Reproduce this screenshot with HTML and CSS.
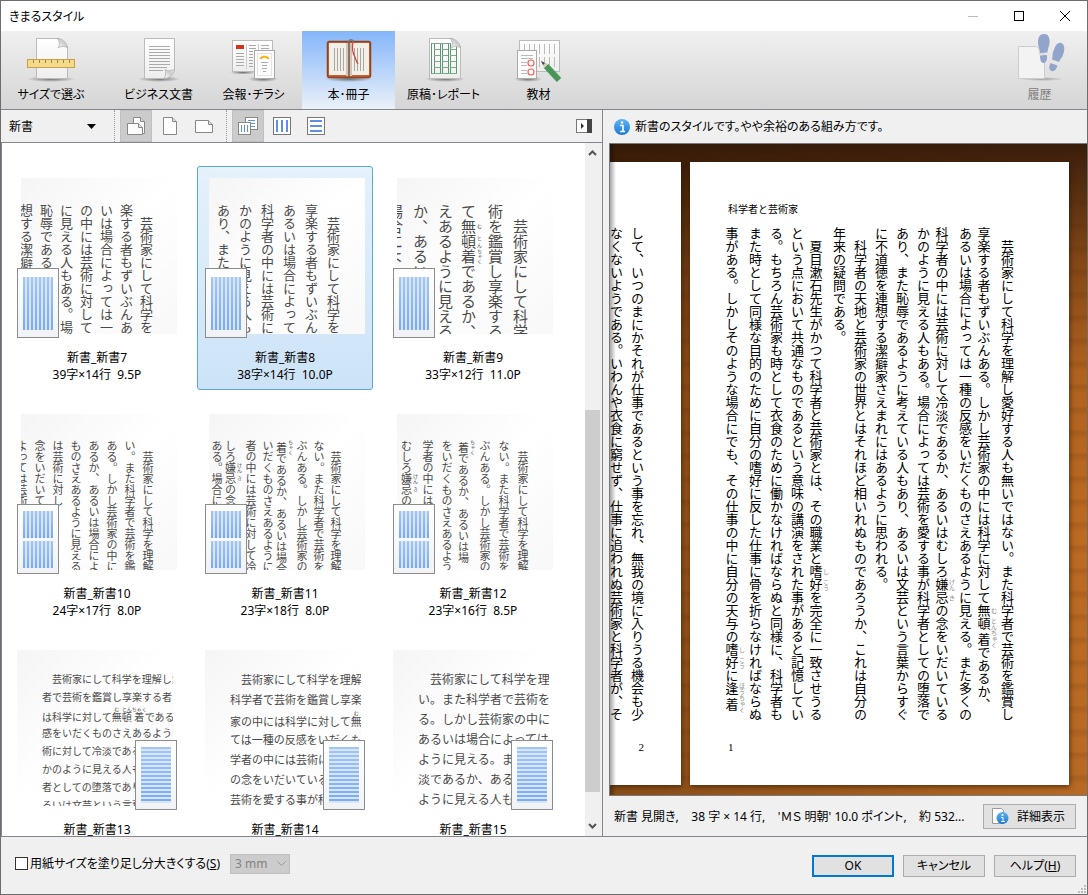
FILE: index.html
```html
<!DOCTYPE html>
<html lang="ja">
<head>
    <meta charset="UTF-8">
    <meta name="viewport" content="width=device-width, initial-scale=1.0">
    <title>きまるスタイル</title>
    <link rel="stylesheet" href="styles.css">
</head>
<body>
<div class="window">

    <!-- Title bar -->
    <header class="titlebar">
        <h1>きまるスタイル</h1>
        <div class="window-buttons">
            <button type="button" aria-label="最小化" disabled><svg width="12" height="12" viewBox="0 0 12 12"><path d="M1 6.5h10" stroke="#bbb" fill="none"/></svg></button>
            <button type="button" aria-label="最大化"><svg width="12" height="12" viewBox="0 0 12 12"><rect x="1.5" y="1.5" width="9" height="9" stroke="#000" fill="none"/></svg></button>
            <button type="button" aria-label="閉じる"><svg width="12" height="12" viewBox="0 0 12 12"><path d="M1 1l10 10M11 1L1 11" stroke="#000" fill="none"/></svg></button>
        </div>
    </header>

    <!-- Categories -->
    <nav class="categories">
        <button type="button" class="category category-first">
            <svg width="50" height="50" viewBox="0 0 50 50">
                <defs>
                    <linearGradient id="paper" x1="0" y1="0" x2="0" y2="1"><stop offset="0" stop-color="#fff"/><stop offset="1" stop-color="#eee"/></linearGradient>
                    <linearGradient id="curl" x1="0" y1="1" x2="1" y2="0"><stop offset="0" stop-color="#fff"/><stop offset="0.6" stop-color="#ccc"/><stop offset="1" stop-color="#f4f4f4"/></linearGradient>
                    <radialGradient id="shade"><stop offset="0" stop-color="#555" stop-opacity="0.8"/><stop offset="1" stop-color="#555" stop-opacity="0"/></radialGradient>
                </defs>
                <ellipse cx="25" cy="46" rx="24" ry="3" fill="url(#shade)"/>
                <path d="M10.5 5.5H33L41.5 14v31.5h-31z" fill="url(#paper)" stroke="#bbb"/>
                <path d="M31 5.5c3 3 3 6 1 9.5 3-2 6-2 9.5-0.5-1-5-5-9-10.5-9z" fill="url(#curl)" stroke="#aaa" stroke-width="0.7"/>
                <rect x="1.5" y="26.5" width="47" height="8" fill="#f5da8c" stroke="#c9a04a"/>
                <path d="M7.5 27v3M13.5 27v3M19.5 27v3M25.5 27v3M31.5 27v3M37.5 27v3M43.5 27v3" stroke="#a88338"/>
            </svg>
            <span>サイズで選ぶ</span>
        </button>
        <button type="button" class="category">
            <svg width="50" height="50" viewBox="0 0 50 50">
                <ellipse cx="25" cy="46" rx="21" ry="3" fill="url(#shade)"/>
                <path d="M10.5 5.5h30v32l-8 8h-22z" fill="url(#paper)" stroke="#bbb"/>
                <path d="M15 13.5h21M15 16.5h21M15 19.5h21M15 22.5h21M15 25.5h21M15 28.5h21M15 31.5h21M15 34.5h18M15 37.5h14" stroke="#aaa"/>
                <path d="M30 45.5c2-3 2-6 1-9 4 2 6 1.5 9.5-0.5 0 5-5 9.5-10.5 9.5z" fill="url(#curl)" stroke="#aaa" stroke-width="0.7"/>
            </svg>
            <span>ビジネス文書</span>
        </button>
        <button type="button" class="category">
            <svg width="50" height="50" viewBox="0 0 50 50">
                <ellipse cx="34" cy="46" rx="15" ry="3" fill="url(#shade)"/>
                <ellipse cx="14" cy="39.5" rx="13" ry="2" fill="url(#shade)"/>
                <rect x="3.5" y="7.5" width="40" height="31" fill="url(#paper)" stroke="#bbb"/>
                <rect x="7" y="12" width="8" height="4" fill="#d8321f"/>
                <path d="M17.5 11v25M29.5 11v8" stroke="#ccc"/>
                <path d="M7 20.5h8M7 23.5h8M7 26.5h8M7 29.5h8M7 32.5h8M20 12.5h7M20 15.5h7M20 18.5h4M20 21.5h4M20 24.5h4M20 27.5h4M20 30.5h4M20 33.5h4M32 12.5h8M32 15.5h8" stroke="#aaa"/>
                <rect x="25.5" y="17.5" width="20" height="28" fill="#fcfcfc" stroke="#aaa"/>
                <rect x="28.5" y="20.5" width="14" height="22" fill="none" stroke="#ccc" stroke-dasharray="1 1"/>
                <path d="M31.5 26c1-3 7-3 8 0" fill="none" stroke="#fbb313" stroke-width="2"/>
                <path d="M32 29.5h7M33 32.5h5M33 35.5h5M34 38.5h3" stroke="#aaa"/>
            </svg>
            <span>会報･チラシ</span>
        </button>
        <button type="button" class="category selected">
            <svg width="50" height="50" viewBox="0 0 50 50">
                <ellipse cx="25" cy="46" rx="24" ry="3" fill="url(#shade)"/>
                <rect x="3.5" y="8.5" width="43" height="36" rx="2" fill="#c56035" stroke="#93421f" stroke-width="1.5"/>
                <rect x="5" y="10" width="40" height="32" fill="#f2f0e8"/>
                <path d="M22 10h6v33h-6z" fill="#c9c7be"/>
                <path d="M25 8v37" stroke="#86523a" stroke-width="1.5"/>
                <path d="M10.5 15v23M13.5 15v23M16.5 15v23M19.5 15v23M30.5 15v23M33.5 15v23M36.5 15v23M39.5 15v23" stroke="#aaa79f"/>
                <path d="M25 9c0-3 4-3 4 0" fill="none" stroke="#77777c" stroke-width="1.5"/>
                <path d="M29 9c-2 10 1 12 2 15s1 4 3 7" fill="none" stroke="#c9453a" stroke-width="1.2"/>
            </svg>
            <span>本･冊子</span>
        </button>
        <button type="button" class="category">
            <svg width="50" height="50" viewBox="0 0 50 50">
                <ellipse cx="26" cy="46" rx="20" ry="3" fill="url(#shade)"/>
                <path d="M10.5 5.5h23l8 8v32h-31z" fill="url(#paper)" stroke="#bbb"/>
                <path d="M12.5 10v31M15.5 10v31M21.5 10v31M23.5 10v31M29.5 10v31M31.5 10v31M37.5 14v27" stroke="#5c9672"/>
                <path d="M12 10.5h20M12 40.5h26M15 16.5h6M15 22.5h6M15 28.5h6M15 34.5h6M23 16.5h6M23 22.5h6M23 28.5h6M23 34.5h6M31 16.5h6M31 22.5h6M31 28.5h6M31 34.5h6" stroke="#7aab8d"/>
                <path d="M31 5.5c3 3 3 6 1 9.5 3-2 6-2 9.5-0.5-1-5-5-9-10.5-9z" fill="url(#curl)" stroke="#aaa" stroke-width="0.7"/>
            </svg>
            <span>原稿･レポート</span>
        </button>
        <button type="button" class="category">
            <svg width="50" height="50" viewBox="0 0 50 50">
                <ellipse cx="14" cy="46" rx="14" ry="3" fill="url(#shade)"/>
                <rect x="5.5" y="7.5" width="40" height="31" fill="url(#paper)" stroke="#bbb"/>
                <path d="M10.5 11v10M15.5 11v10M20.5 11v10M25.5 11v10M30.5 11v10M35.5 11v10M40.5 11v10M25.5 24v10M30.5 24v10M35.5 24v10M40.5 24v10" stroke="#bbb"/>
                <rect x="3.5" y="17.5" width="19" height="28" fill="#fcfcfc" stroke="#aaa"/>
                <path d="M7 22.5h12M7 25.5h12M7 29.5h6M7 32.5h6M7 37.5h6M7 40.5h6" stroke="#bbb"/>
                <circle cx="17" cy="30" r="3" fill="none" stroke="#f0625a" stroke-width="1.2"/>
                <circle cx="17" cy="39" r="3" fill="none" stroke="#f0625a" stroke-width="1.2"/>
                <path d="M32 33L45 47" stroke="#4a9458" stroke-width="6"/>
                <path d="M34 31L47 45" stroke="#6ab176" stroke-width="1"/>
                <path d="M27 28l7 3-4 4z" fill="#d8cbb5"/>
                <path d="M27 28l4 2-2 2z" fill="#444"/>
            </svg>
            <span>教材</span>
        </button>
        <button type="button" class="category history" disabled>
            <svg width="50" height="50" viewBox="0 0 50 50">
                <ellipse cx="27" cy="46" rx="22" ry="2" fill="url(#shade)" opacity="0.6"/>
                <path d="M3.5 13.5h18l8 8v24h-26z" fill="#f3f3f3" stroke="#ccc"/>
                <path d="M23 14l1 8 6 1z" fill="#ddd"/>
                <path d="M29 1c5 0 6 5 5.5 9.5-0.5 3-2 6-2 9L25 20c0-4-2-6-2-11s2-8 6-8z" fill="#93a4cb"/>
                <path d="M25 22.5l7-0.5c0.5 5-1 8-3.5 8S25 27 25 22.5z" fill="#93a4cb"/>
                <path d="M46 10c4 1 4 7 2 12-1 3-3 4-4 7l-7-2.5c1-3 0-6 2-10 2-5 4-7.5 7-6.5z" fill="#93a4cb"/>
                <path d="M35.5 30l7 2.5c-1 4-3.5 6.5-6 5.5s-3-4-1-8z" fill="#93a4cb"/>
            </svg>
            <span>履歴</span>
        </button>
    </nav>

    <main class="workspace">

        <!-- Style list -->
        <section class="styles-pane">
            <div class="toolbar">
                <span class="genre">
                    <select aria-label="ジャンル"><option>新書</option></select>
                    <svg width="9" height="5" viewBox="0 0 9 5"><path d="M0 0h9L4.5 5z"/></svg>
                </span>
                <div class="tools">
                    <button type="button" class="tool pressed" aria-label="縦横すべて"><svg width="20" height="20" viewBox="0 0 20 20"><path d="M7.5 1.5h7l4 4v12h-11z" fill="#fdfdfd" stroke="#888"/><path d="M14.5 1.5v4h4" fill="#ddd" stroke="#888"/><path d="M1.5 7.5h11l4 4v7h-15z" fill="#fdfdfd" stroke="#888"/><path d="M12.5 7.5v4h4" fill="#ddd" stroke="#888"/></svg></button>
                    <button type="button" class="tool" aria-label="用紙縦"><svg width="20" height="20" viewBox="0 0 20 20"><path d="M3.5 1.5h9l4 4v13h-13z" fill="#fdfdfd" stroke="#888"/><path d="M12.5 1.5v4h4" fill="#ddd" stroke="#888"/></svg></button>
                    <button type="button" class="tool" aria-label="用紙横"><svg width="20" height="20" viewBox="0 0 20 20"><path d="M1.5 4.5h13l4 4v8h-17z" fill="#fdfdfd" stroke="#888"/><path d="M14.5 4.5v4h4" fill="#ddd" stroke="#888"/></svg></button>
                </div>
                <div class="tools">
                    <button type="button" class="tool pressed" aria-label="文字方向すべて"><svg width="20" height="20" viewBox="0 0 20 20"><rect x="7.5" y="1.5" width="12" height="12" fill="#fdfdfd" stroke="#888"/><path d="M10 4.5h7M10 7.5h7M10 10.5h7" stroke="#5d90e0"/><rect x="0.5" y="6.5" width="12" height="12" fill="#fdfdfd" stroke="#888"/><path d="M3.5 9v7M6.5 9v7M9.5 9v7" stroke="#5d90e0"/></svg></button>
                    <button type="button" class="tool" aria-label="縦書き"><svg width="20" height="20" viewBox="0 0 20 20"><rect x="1.5" y="1.5" width="17" height="17" fill="#fff" stroke="#777"/><path d="M5 4v12M10 4v12M15 4v12" stroke="#5d90e0" stroke-width="2"/></svg></button>
                    <button type="button" class="tool" aria-label="横書き"><svg width="20" height="20" viewBox="0 0 20 20"><rect x="1.5" y="1.5" width="17" height="17" fill="#fff" stroke="#777"/><path d="M4 5h12M4 10h12M4 15h12" stroke="#5d90e0" stroke-width="2"/></svg></button>
                </div>
                <button type="button" class="collapse" aria-label="一覧を広げる"><svg width="16" height="14" viewBox="0 0 16 14"><rect x="0.5" y="0.5" width="15" height="13" fill="#fff" stroke="#777"/><path d="M11 0h5v14h-5z" fill="#444"/><path d="M5 4l3 3-3 3z" fill="#333"/></svg></button>
            </div>

            <div class="list">
                <div class="cards">
                    <article class="card">
                        <div class="thumb vertical size-13 pitch-20">
                            <div class="sample"><p>　芸術家にして科学を理</p><p>楽する者もずいぶんあ</p><p>いは場合によっては一種</p><p>の中には芸術に対して</p><p>に見える人もある。場合</p><p>恥辱である</p><p>想する潔癖</p></div>
                            <div class="badge"><i></i></div>
                        </div>
                        <h2>新書_新書7</h2>
                        <p class="spec">39字×14行&nbsp; 9.5P</p>
                    </article>
                    <article class="card active">
                        <div class="thumb vertical size-13 pitch-22">
                            <div class="sample"><p>　芸術家にして科学を</p><p>享楽する者もずいぶん</p><p>あるいは場合によって</p><p>科学者の中には芸術に</p><p>かのように見える人も</p><p>あり、また</p></div>
                            <div class="badge"><i></i></div>
                        </div>
                        <h2>新書_新書8</h2>
                        <p class="spec">38字×14行&nbsp; 10.0P</p>
                    </article>
                    <article class="card">
                        <div class="thumb vertical size-15 pitch-25">
                            <div class="sample"><p>　芸術家にして科学</p><p>術を鑑賞し享楽する</p><p>て<ruby>無<rt>む</rt>頓<rt>とん</rt>着<rt>ちゃく</rt></ruby>であるか、</p><p>えあるように見える</p><p>か、あるい</p><p>場合によ</p></div>
                            <div class="badge"><i></i></div>
                        </div>
                        <h2>新書_新書9</h2>
                        <p class="spec">33字×12行&nbsp; 11.0P</p>
                    </article>

                    <article class="card">
                        <div class="thumb vertical size-11 pitch-18">
                            <div class="sample"><p>　芸術家にして科学を理解</p><p>い。また科学者で芸術を鑑</p><p>ある。しかし芸術家の中に</p><p>あるか、あるいは場合によ</p><p>ものさえあるように見える</p><p>は芸術に対し</p><p>念をいだいて</p><p>よっては芸術</p></div>
                            <div class="badge split"><i></i><i></i></div>
                        </div>
                        <h2>新書_新書10</h2>
                        <p class="spec">24字×17行&nbsp; 8.0P</p>
                    </article>
                    <article class="card">
                        <div class="thumb vertical size-11 pitch-17">
                            <div class="sample"><p>　芸術家にして科学を理解</p><p>ない。また科学者で芸術を</p><p>ぶんある。しかし芸術家の</p><p><ruby>着<rt>ちゃく</rt></ruby>であるか、あるいは場合</p><p>いだくものさえあるように</p><p>者の中には芸術に対して冷</p><p>しろ<ruby>嫌<rt>けん</rt>忌<rt>き</rt></ruby>の念</p><p>ある。場合に</p></div>
                            <div class="badge split"><i></i><i></i></div>
                        </div>
                        <h2>新書_新書11</h2>
                        <p class="spec">23字×18行&nbsp; 8.0P</p>
                    </article>
                    <article class="card">
                        <div class="thumb vertical size-11 pitch-19">
                            <div class="sample"><p>　芸術家にして科学を理解</p><p>ない。また科学者で芸術を</p><p>ぶんある。しかし芸術家の</p><p><ruby>着<rt>ちゃく</rt></ruby>であるか、あるいは場</p><p>をいだくものさえあるよう</p><p>学者の中には</p><p>むしろ<ruby>嫌<rt>けん</rt>忌<rt>き</rt></ruby>の</p></div>
                            <div class="badge split"><i></i><i></i></div>
                        </div>
                        <h2>新書_新書12</h2>
                        <p class="spec">23字×16行&nbsp; 8.5P</p>
                    </article>

                    <article class="card">
                        <div class="thumb horizontal size-10 pitch-18">
                            <div class="sample"><p>　芸術家にして科学を理解し愛</p><p>者で芸術を鑑賞し享楽する者も</p><p>は科学に対して<ruby>無<rt>む</rt>頓<rt>とん</rt>着<rt>ちゃく</rt></ruby>であるか</p><p>感をいだくものさえあるように見</p><p>術に対して冷淡である</p><p>かのように見える人も</p><p>者としての堕落であり</p><p>るいは文芸という言葉</p></div>
                            <div class="badge"><i></i></div>
                        </div>
                        <h2>新書_新書13</h2>
                        <p class="spec">26字×22行&nbsp; 8.5P</p>
                    </article>
                    <article class="card">
                        <div class="thumb horizontal size-11 pitch-20">
                            <div class="sample"><p>　芸術家にして科学を理解</p><p>科学者で芸術を鑑賞し享楽</p><p>家の中には科学に対して<ruby>無<rt>む</rt></ruby></p><p>ては一種の反感をいだくもの</p><p>学者の中には芸術に</p><p>の念をいだいている</p><p>芸術を愛する事が科</p></div>
                            <div class="badge"><i></i></div>
                        </div>
                        <h2>新書_新書14</h2>
                        <p class="spec">25字×20行&nbsp; 9.0P</p>
                    </article>
                    <article class="card">
                        <div class="thumb horizontal size-12 pitch-20">
                            <div class="sample"><p>　芸術家にして科学を理</p><p>い。また科学者で芸術を鑑</p><p>る。しかし芸術家の中には</p><p>あるいは場合によっては一</p><p>ように見える。また</p><p>淡であるか、あるい</p><p>ように見える人もあ</p></div>
                            <div class="badge"><i></i></div>
                        </div>
                        <h2>新書_新書15</h2>
                        <p class="spec">23字×20行&nbsp; 9.5P</p>
                    </article>
                </div>

                <div class="scrollbar">
                    <svg width="9" height="6" viewBox="0 0 9 6"><path d="M1 5l3.5-3.5L8 5" fill="none" stroke="#555" stroke-width="2"/></svg>
                    <div class="track"><div class="handle"></div></div>
                    <svg width="9" height="6" viewBox="0 0 9 6"><path d="M1 1l3.5 3.5L8 1" fill="none" stroke="#555" stroke-width="2"/></svg>
                </div>
            </div>
        </section>

        <!-- Preview -->
        <section class="preview-pane">
            <p class="hint">
                <svg width="18" height="18" viewBox="0 0 18 18"><defs><linearGradient id="info" x1="0" y1="0" x2="0" y2="1"><stop offset="0" stop-color="#5fb4f2"/><stop offset="1" stop-color="#1a78d6"/></linearGradient></defs><circle cx="9" cy="9" r="8" fill="url(#info)"/><circle cx="9" cy="4.5" r="1.3" fill="#fff"/><path d="M7 7.5h3v6M7 13.5h5" fill="none" stroke="#fff" stroke-width="1.6"/></svg>
                新書のスタイルです。やや余裕のある組み方です。
            </p>
            <div class="desk">
                <div class="page page-next">
                    <h3></h3>
                    <div class="body-text"><p>して、いつのまにかそれが仕事であるという事を忘れ、無我の境に入りうる機会も少</p><p>なくないようである。いわんや衣食に窮せず、仕事に追われぬ芸術家と科学者が、そ</p></div>
                    <div class="folio">2</div>
                </div>
                <div class="page page-first">
                    <h3>科学者と芸術家</h3>
                    <div class="body-text">
                        <p>　芸術家にして科学を理解し愛好する人も無いではない。また科学者で芸術を鑑賞し</p>
                        <p>享楽する者もずいぶんある。しかし芸術家の中には科学に対して<ruby>無<rt>む</rt>頓<rt>とん</rt>着<rt>ちゃく</rt></ruby>であるか、</p>
                        <p>あるいは場合によっては一種の反感をいだくものさえあるように見える。また多くの</p>
                        <p>科学者の中には芸術に対して冷淡であるか、あるいはむしろ<ruby>嫌<rt>けん</rt>忌<rt>き</rt></ruby>の念をいだいている</p>
                        <p>かのように見える人もある。場合によっては芸術を愛する事が科学者としての堕落で</p>
                        <p>あり、また恥辱であるように考えている人もあり、あるいは文芸という言葉からすぐ</p>
                        <p>に不道徳を連想する潔癖家さえまれにはあるように思われる。</p>
                        <p>　科学者の天地と芸術家の世界とはそれほど相いれぬものであろうか、これは自分の</p>
                        <p>年来の疑問である。</p>
                        <p>　夏目漱石先生がかつて科学者と芸術家とは、その職業と<ruby>嗜<rt>し</rt>好<rt>こう</rt></ruby>を完全に一致させうる</p>
                        <p>という点において共通なものであるという意味の講演をされた事があると記憶してい</p>
                        <p>る。もちろん芸術家も時として衣食のために働かなければならぬと同様に、科学者も</p>
                        <p>また時として同様な目的のために自分の嗜好に反した仕事に骨を折らなければならぬ</p>
                        <p>事がある。しかしそのような場合にでも、その仕事の中に自分の天与の<ruby>嗜<rt>し</rt>好<rt>こう</rt></ruby>に<ruby>逢<rt>ほう</rt>着<rt>ちゃく</rt></ruby></p>
                    </div>
                    <div class="folio">1</div>
                </div>
            </div>
            <div class="status">
                <p>新書 見開き,&nbsp;&nbsp;&nbsp; 38 字 × 14 行,&nbsp;&nbsp;&nbsp; 'ＭＳ 明朝' 10.0 ポイント,&nbsp;&nbsp;&nbsp; 約 532...</p>
                <button type="button" class="button detail">
                    <svg width="18" height="18" viewBox="0 0 18 18"><path d="M1.5 1.5h9l2 2v13h-11z" fill="#fff" stroke="#999"/><circle cx="11.5" cy="11" r="6" fill="url(#info)"/><circle cx="11.5" cy="8" r="1" fill="#fff"/><path d="M10 10.5h2v4M10 14.5h4" fill="none" stroke="#fff"/></svg>
                    詳細表示
                </button>
            </div>
        </section>
    </main>

    <!-- Dialog buttons -->
    <footer class="footer">
        <div class="options">
            <input type="checkbox" id="bleed">
            <label for="bleed">用紙サイズを塗り足し分大きくする(<u>S</u>)</label>
            <span class="bleed-size">
                <select aria-label="塗り足し幅" disabled><option>3 mm</option></select>
                <svg width="9" height="6" viewBox="0 0 9 6"><path d="M0.5 0.5l4 4 4-4" fill="none" stroke="#999"/></svg>
            </span>
        </div>
        <div class="actions">
            <button type="button" class="button default">OK</button>
            <button type="button" class="button">キャンセル</button>
            <button type="button" class="button">ヘルプ(<u>H</u>)</button>
        </div>
        <svg class="grip" width="10" height="10" viewBox="0 0 10 10"><path d="M7 1h2v2H7zM4 4h2v2H4zM7 4h2v2H7zM1 7h2v2H1zM4 7h2v2H4zM7 7h2v2H7z" fill="#bbb"/></svg>
    </footer>
</div>
</body>
</html>
```
FILE: styles.css
```css
/* General Styles */
* {
    box-sizing: border-box;
}

body {
    margin: 0;
    font-family: "Noto Sans", "Noto Sans CJK JP", sans-serif;
    font-size: 12px;
    line-height: 17px;
    color: #000;
    font-feature-settings: "palt";
}

h1, h2, h3, p {
    margin: 0;
    font-size: inherit;
    font-weight: normal;
}

button, select {
    font: inherit;
    font-feature-settings: inherit;
    color: inherit;
    margin: 0;
    padding: 0;
}

svg {
    display: block;
    flex: none;
}

.window {
    display: flex;
    flex-direction: column;
    height: 100vh;
    border: 1px solid #6d6d70;
    background: #f0f0f0;
    overflow: hidden;
}

/* Title bar */
.titlebar {
    display: flex;
    flex: none;
    justify-content: space-between;
    align-items: center;
    height: 30px;
    padding-left: 8px;
    background: #fff;
}

.window-buttons {
    display: flex;
    gap: 2px;
}

.window-buttons button {
    display: flex;
    justify-content: center;
    align-items: center;
    width: 44px;
    height: 30px;
    border: 0;
    background: none;
}

/* Categories */
.categories {
    display: flex;
    flex: none;
    height: 79px;
    border-bottom: 1px solid #83878d;
    background: linear-gradient(#f0f0f0, #d5d5d5);
}

.category {
    display: flex;
    flex-direction: column;
    align-items: center;
    width: 93px;
    padding-top: 2px;
    margin-right: 2px;
    border: 0;
    background: none;
    line-height: 24px;
}

.category-first {
    width: 100px;
    margin-right: 11px;
}

.category.selected {
    background: linear-gradient(#84b6fa, #ebf1f8);
}

.category.history {
    margin-left: auto;
    margin-right: 1px;
    color: #808080;
}

/* Main area */
.workspace {
    display: flex;
    flex: 1;
    min-height: 0;
    border-bottom: 1px solid #83878d;
}

.styles-pane {
    display: flex;
    flex-direction: column;
    width: 602px;
    border-right: 1px solid #83878d;
}

.toolbar {
    display: flex;
    flex: none;
    align-items: center;
    height: 33px;
    border-bottom: 1px solid #83878d;
}

.genre {
    display: flex;
    align-items: center;
    width: 113px;
}

.genre select {
    width: 86px;
    padding-left: 8px;
    border: 0;
    background: none;
    appearance: none;
}

.tools {
    display: flex;
    gap: 2px;
    height: 32px;
    padding: 0 6px 0 5px;
    border-left: 1px dotted #999;
}

.tool {
    display: flex;
    justify-content: center;
    align-items: center;
    width: 32px;
    border: 0;
    background: none;
}

.tool.pressed {
    background: #cbcbcb;
    border: 1px solid #c0c0c0;
}

.collapse {
    margin: 0 10px 0 auto;
    border: 0;
    background: none;
}

/* Style list */
.list {
    display: flex;
    flex: 1;
    min-height: 0;
    justify-content: space-between;
    background: #fff;
    border-left: 1px solid #83878d;
}

.cards {
    display: grid;
    grid-template-columns: repeat(3, 176px);
    grid-auto-rows: 224px;
    gap: 12px;
    padding: 23px 0 0 7px;
    overflow: hidden;
}

.card {
    padding: 11px 11px 0;
    border: 1px solid transparent;
    border-radius: 3px;
    text-align: center;
}

.card.active {
    border-color: #5ba7e0;
    background: linear-gradient(#e5f1fb, #cce3f7);
}

.card h2 {
    margin-top: 15px;
}

.thumb {
    position: relative;
    width: 156px;
    height: 156px;
    background: linear-gradient(135deg, #f5f5f5, #fff 50%, #f8f8f8);
    color: #4a4a4a;
    text-align: left;
    font-feature-settings: normal;
}

.sample {
    width: 156px;
    height: 156px;
    overflow: hidden;
    white-space: nowrap;
}

.vertical .sample {
    writing-mode: vertical-rl;
    padding: 26px 21px 0 0;
}

.horizontal {
    left: -4px;
}

.horizontal .sample {
    padding: 20px 0 0 25px;
}

.sample p {
    block-size: 1lh;
}

.size-10 { font-size: 10px; }
.size-11 { font-size: 11px; }
.size-12 { font-size: 12px; }
.size-13 { font-size: 13px; }
.size-15 { font-size: 15px; }

.pitch-17 { line-height: 17px; }
.pitch-18 { line-height: 18px; }
.pitch-19 { line-height: 19px; }
.pitch-20 { line-height: 20px; }
.pitch-22 { line-height: 22px; }
.pitch-25 { line-height: 25px; }

rt {
    font-size: 5px;
    line-height: 1;
}

/* Layout mark over the corner of the sample */
.badge {
    position: absolute;
    left: -4px;
    bottom: -4px;
    display: flex;
    flex-direction: column;
    justify-content: center;
    align-items: center;
    gap: 3px;
    width: 42px;
    height: 70px;
    border: 1px solid #8c8c8c;
    background: linear-gradient(#fff, #f0f2f5);
}

.badge i {
    width: 30px;
    height: 53px;
    background:
        repeating-linear-gradient(90deg, transparent 0 2px, #d6e5fa 2px 4px),
        linear-gradient(#a3c5f5, #7aa9ee);
}

.badge.split i {
    height: 27px;
}

.horizontal .badge {
    left: auto;
    right: -4px;
}

.horizontal .badge i {
    height: 56px;
    background:
        repeating-linear-gradient(transparent 0 2px, #d6e5fa 2px 4px),
        linear-gradient(#a3c5f5, #7aa9ee);
}

.scrollbar {
    display: flex;
    flex-direction: column;
    align-items: center;
    width: 17px;
    padding: 7px 3px 7px 0;
    background: #f0f0f0;
}

.track {
    display: flex;
    flex: 1;
    flex-direction: column;
    justify-content: flex-end;
    width: 15px;
    padding-bottom: 31px;
}

.handle {
    height: 60%;
    background: #cdcdcd;
}

/* Preview */
.preview-pane {
    display: flex;
    flex: 1;
    flex-direction: column;
    min-width: 0;
    padding-left: 6px;
}

.hint {
    display: flex;
    flex: none;
    align-items: center;
    gap: 4px;
    height: 33px;
    padding-left: 4px;
}

.desk {
    position: relative;
    display: flex;
    flex: 1;
    min-height: 0;
    gap: 9px;
    padding: 18px 18px 10px 0;
    border: 1px solid #77797d;
    border-right: 0;
    background:
        repeating-linear-gradient(#50200000 0 9px, #50200020 12px 13px, #50200000 19px 23px),
        linear-gradient(90deg, #2a140055, #2a140022 60%, #2a140000),
        linear-gradient(#3a1d0b, #4a270f 4%, #834717 18%, #b0621f 35%, #bd6a22 60%, #b86a24);
    overflow: hidden;
}

/* Shadow cast by the left edge of the frame */
.desk::after {
    content: "";
    position: absolute;
    left: 0;
    top: 0;
    bottom: 0;
    width: 6px;
    background: linear-gradient(90deg, #00000059, #00000000);
}

.page {
    display: flex;
    flex-direction: column;
    background: #fff;
    box-shadow: 1px 2px 5px #2a140099;
    font-family: "Noto Sans CJK JP", sans-serif;
    font-size: 13px;
    line-height: 21px;
    font-feature-settings: normal;
}

.page-first {
    width: 379px;
    padding: 41px 51px 0 34px;
}

.page-next {
    flex: 1;
    min-width: 0;
    align-items: flex-end;
    padding: 41px 33px 0 0;
}

.page h3 {
    height: 12px;
    margin: 0 4px 12px;
    font-size: 10px;
    line-height: 12px;
}

.body-text {
    height: 494px;
    writing-mode: vertical-rl;
    white-space: nowrap;
    font-weight: 300;
}

.body-text p {
    block-size: 21px;
}

.body-text rt {
    font-size: 6px;
    color: #888;
}

.folio {
    margin: 20px 4px 0;
    font-family: "Liberation Serif", serif;
    font-size: 11px;
    line-height: 12px;
}

.status {
    display: flex;
    flex: none;
    justify-content: space-between;
    align-items: center;
    height: 40px;
    padding: 0 11px 0 5px;
    white-space: pre;
}

/* Buttons */
.button {
    width: 82px;
    height: 22px;
    border: 1px solid #adadad;
    background: #e1e1e1;
    white-space: nowrap;
}

.button.default {
    border: 2px solid #0078d7;
}

.button.detail {
    display: flex;
    align-items: center;
    gap: 8px;
    width: 93px;
    height: 25px;
    padding-left: 7px;
}

/* Footer */
.footer {
    position: relative;
    display: flex;
    flex: none;
    justify-content: space-between;
    align-items: center;
    height: 57px;
    padding: 0 11px 0 14px;
}

.options {
    display: flex;
    align-items: center;
    padding-bottom: 4px;
}

.options input {
    width: 13px;
    height: 13px;
    margin: 0 2px 0 0;
    border: 1px solid #333;
    background: #fff;
    appearance: none;
}

.bleed-size {
    display: flex;
    align-items: center;
    width: 60px;
    height: 20px;
    margin-left: 10px;
    border: 1px solid #bfbfbf;
    background: #ccc;
    color: #838383;
}

.bleed-size select {
    width: 46px;
    padding-left: 4px;
    border: 0;
    background: none;
    color: inherit;
    opacity: 1;
    appearance: none;
}

.actions {
    display: flex;
    gap: 9px;
}

.grip {
    position: absolute;
    right: 0;
    bottom: 0;
}
```
